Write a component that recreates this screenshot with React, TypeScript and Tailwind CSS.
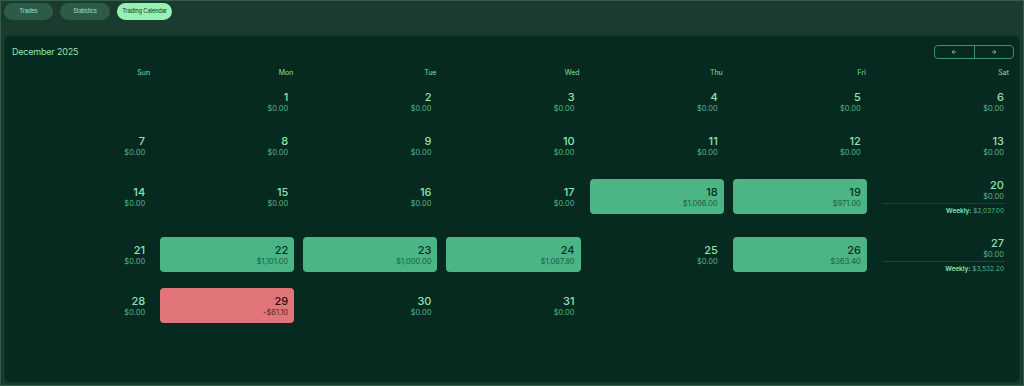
import { ArrowLeft, ArrowRight } from 'lucide-react'

type Day = { day: number; amount: number; weekly?: number } | null

const DAYS: Record<number, number> = { 18: 1066, 19: 971, 22: 1101, 23: 1000, 24: 1067.8, 26: 363.4, 29: -61.1 }
const WEEKLY: Record<number, number> = { 20: 2037, 27: 3532.2 }

const fmt = (n: number) =>
  (n < 0 ? '-$' : '$') + Math.abs(n).toLocaleString('en-US', { minimumFractionDigits: 2, maximumFractionDigits: 2 })

function buildWeeks(): Day[][] {
  const cells: Day[] = [null]
  for (let d = 1; d <= 31; d++) cells.push({ day: d, amount: DAYS[d] ?? 0, weekly: WEEKLY[d] })
  while (cells.length % 7) cells.push(null)
  const weeks: Day[][] = []
  for (let i = 0; i < cells.length; i += 7) weeks.push(cells.slice(i, i + 7))
  return weeks
}

const tabs = [
  { label: 'Trades', w: 'w-[49px]' },
  { label: 'Statistics', w: 'w-[50px]' },
  { label: 'Trading Calendar', w: 'w-[55px]' },
]
const weekdays = ['Sun', 'Mon', 'Tue', 'Wed', 'Thu', 'Fri', 'Sat']

function Cell({ d }: { d: Day }) {
  if (!d) return <div />
  const win = d.amount > 0
  const loss = d.amount < 0
  const box = win ? 'bg-[#4cb585]' : loss ? 'bg-[#e2757a]' : ''
  const num = win ? 'text-[#0c2b1f]' : loss ? 'text-[#2a0c0c]' : 'text-[#8fe5b0]'
  const amt = win ? 'text-[#1f5b40]' : loss ? 'text-[#5b2326]' : 'text-[#55b884]'
  return (
    <div className={`flex flex-col items-end rounded-[4px] px-[6px] pt-[6px] pb-[5px] ${d.weekly !== undefined ? '' : 'h-[35px]'} ${box}`}>
      <span className={`text-[11px] leading-[14px] font-medium ${num}`}>{d.day}</span>
      <span className={`text-[7.5px] leading-[10px] ${amt}`}>{fmt(d.amount)}</span>
      {d.weekly !== undefined && (
        <div className="mt-[1px] w-full border-t border-[#1c4536] pt-[2px] text-right text-[6.5px] leading-[10px]">
          <span className="font-semibold text-[#8fe5b0]">Weekly:</span>{' '}
          <span className="text-[#55b884]">{fmt(d.weekly)}</span>
        </div>
      )}
    </div>
  )
}

export default function App() {
  const weeks = buildWeeks()
  return (
    <div
      className="flex h-[386px] w-[1024px] flex-col border border-[#2f5e4a] bg-[#1b3b2f] px-[3px] pb-[2px] pt-[2px]"
      style={{ fontFamily: 'Inter, "Noto Sans", sans-serif' }}
    >
      {/* Tabs */}
      <div className="flex gap-[7px]">
        {tabs.map((t, i) => (
          <button
            key={t.label}
            className={`h-[17px] whitespace-nowrap rounded-full text-[5.8px] tracking-[-0.15px] ${t.w} ${
              i === 2 ? 'bg-[#98f0b4] text-[#103424]' : 'bg-[#2c5b47] text-[#9fe3bd]'
            }`}
          >
            {t.label}
          </button>
        ))}
      </div>

      {/* Calendar panel */}
      <div className="mt-[15px] flex-1 rounded-[6px] border border-[#0e3a2b] bg-[#062920] pt-[9px]">
        <div className="flex items-center justify-between pl-[7px] pr-[5px]">
          <span className="text-[9px] tracking-[-0.2px] text-[#8fe5b0]">December 2025</span>
          <div className="flex h-[14px] w-[80px] overflow-hidden rounded-[4px] border border-[#3f8f69]">
            <button className="flex flex-1 items-center justify-center border-r border-[#3f8f69] text-[#7fdca5]">
              <ArrowLeft size={6} strokeWidth={3} />
            </button>
            <button className="flex flex-1 items-center justify-center text-[#7fdca5]">
              <ArrowRight size={6} strokeWidth={3} />
            </button>
          </div>
        </div>

        <div className="ml-[12px] mr-[9px] mt-[9px]">
          <div className="grid grid-cols-7 gap-x-[9px]">
            {weekdays.map(w => (
              <span key={w} className="pr-[1px] text-right text-[7px] leading-[10px] text-[#7ee0a5]">
                {w}
              </span>
            ))}
          </div>
          <div className="mt-[6px] flex flex-col gap-[9px]">
            {weeks.map((wk, i) => (
              <div key={i} className="grid grid-cols-7 items-center gap-x-[9px]">
                {wk.map((d, j) => (
                  <Cell key={j} d={d} />
                ))}
              </div>
            ))}
          </div>
        </div>
      </div>
    </div>
  )
}
